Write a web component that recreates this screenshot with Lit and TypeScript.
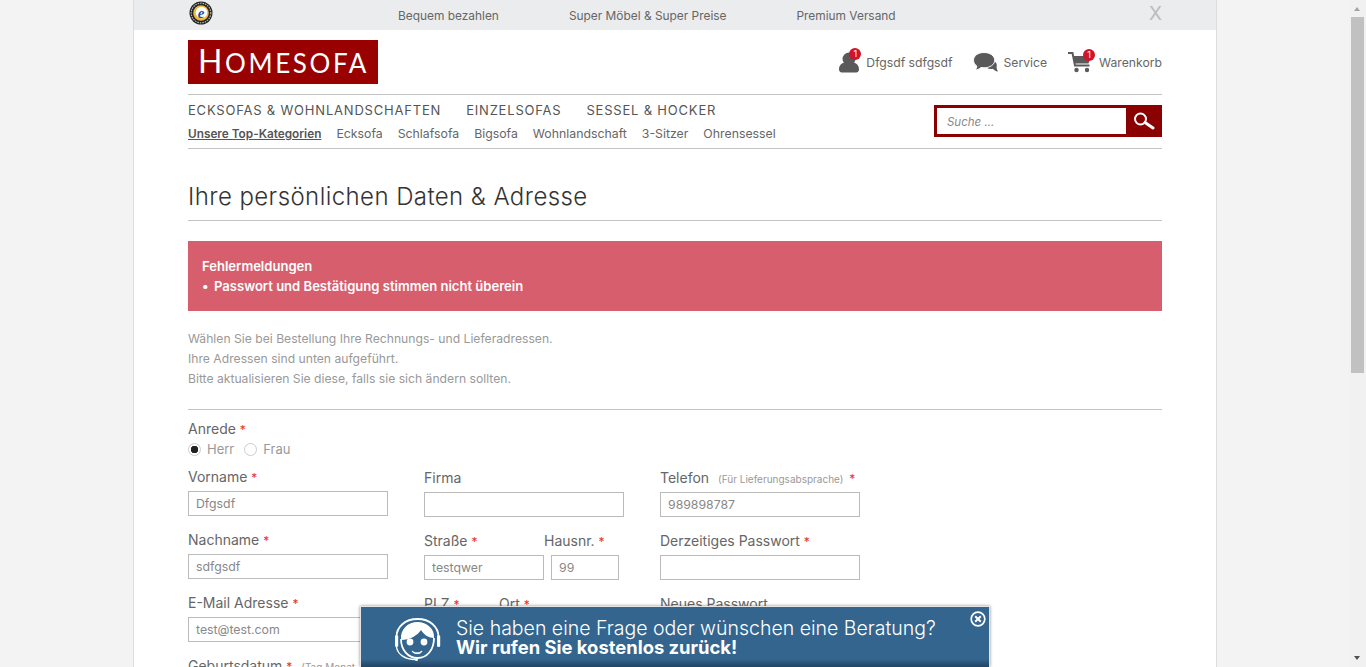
import { LitElement, css, html } from "lit";
import { customElement } from "lit/decorators.js";

const req = html`<span class="req">*</span>`;

@customElement("app-root")
export class AppRoot extends LitElement {
  render() {
    return html`
      <div class="page">
        <div class="sheet">
          <div class="topbar">
            <svg class="seal" width="24" height="24" viewBox="0 0 24 24">
              <circle cx="12" cy="12" r="11.5" fill="#222" />
              <circle cx="12" cy="12" r="9.8" fill="none" stroke="#bbb" stroke-width="1.200" stroke-dasharray="1.500 1" />
              <circle cx="12" cy="12" r="7.800" fill="#e8bb3a" />
              <circle cx="12.500" cy="11.500" r="5.800" fill="#fff" />
              <text x="12" y="16.500" text-anchor="middle" font-family="Liberation Serif" font-style="italic" font-weight="700" font-size="15" fill="#1a4fa0">e</text>
            </svg>
            <div class="usps">
              <span>Bequem bezahlen</span>
              <span>Super Möbel &amp; Super Preise</span>
              <span>Premium Versand</span>
            </div>
            <span class="close-x">X</span>
          </div>

          <div class="inner">
            <header class="head">
              <div class="logo"><span class="big">H</span>OMESOFA</div>
              <div class="tools">
                <a class="tool">
                  <span class="tool-icon">
                    <svg width="22" height="22" viewBox="0 0 22 22">
                      <ellipse cx="11" cy="8" rx="6.500" ry="6.500" fill="#5a5a5a" />
                      <path d="M1 18.500c0-4.500 3-6.500 5.500-7 2.500 2 6.500 2 9 0 2.500.5 5.500 2.500 5.500 7 0 2.500-2 3-4 3H5c-2 0-4-.5-4-3z" fill="#5a5a5a" />
                    </svg>
                    <span class="badge user-badge">1</span>
                  </span>
                  Dfgsdf sdfgsdf
                </a>
                <a class="tool service">
                  <svg width="25" height="20" viewBox="0 0 25 20">
                    <path d="M16 9h5c2.500 1.500 3.500 3.500 2.500 6 0 1.500.5 3 1.500 4.500-2.500-.3-4-1.300-5-2.800-2 .4-4 .3-6-.7z" fill="#5a5a5a" />
                    <path d="M11 .5c6 0 10.700 3.300 10.700 7.700S17 15.800 11 15.800c-1 0-2-.1-3-.3-1.500 1.500-3.500 2.300-6 2.500 1.200-1.300 1.800-2.700 1.800-4C1.700 12.600.500 10.500.500 8.200.500 3.800 5 .5 11 .5z" fill="#5a5a5a" stroke="#fff" stroke-width="1" />
                  </svg>
                  Service
                </a>
                <a class="tool cart">
                  <span class="tool-icon">
                    <svg width="24" height="21" viewBox="0 0 24 21">
                      <path d="M0 1h4.500l2.500 12.500h14.500" fill="none" stroke="#5a5a5a" stroke-width="2" />
                      <path d="M5 4h18l-2.500 7.500H6.500z" fill="#5a5a5a" />
                      <circle cx="8.500" cy="18" r="2.200" fill="#5a5a5a" />
                      <circle cx="19" cy="18" r="2.200" fill="#5a5a5a" />
                    </svg>
                    <span class="badge cart-badge">1</span>
                  </span>
                  Warenkorb
                </a>
              </div>
            </header>

            <nav class="nav">
              <div class="nav-links">
                <div class="main-links">
                  <a>ECKSOFAS &amp; WOHNLANDSCHAFTEN</a>
                  <a>EINZELSOFAS</a>
                  <a>SESSEL &amp; HOCKER</a>
                </div>
                <div class="sub-links">
                  <a class="top">Unsere Top-Kategorien</a>
                  <a>Ecksofa</a>
                  <a>Schlafsofa</a>
                  <a>Bigsofa</a>
                  <a>Wohnlandschaft</a>
                  <a>3-Sitzer</a>
                  <a>Ohrensessel</a>
                </div>
              </div>
              <div class="search">
                <input placeholder="Suche ..." />
                <button aria-label="Suche">
                  <svg width="22" height="18" viewBox="0 0 22 18">
                    <circle cx="7.500" cy="7" r="5.500" fill="none" stroke="#fff" stroke-width="2" />
                    <path d="M12 10.500l8 5.500" stroke="#fff" stroke-width="3" stroke-linecap="round" />
                  </svg>
                </button>
              </div>
            </nav>

            <h1>Ihre persönlichen Daten &amp; Adresse</h1>

            <div class="alert">
              <div>Fehlermeldungen</div>
              <div class="alert-item"><span>•</span>Passwort und Bestätigung stimmen nicht überein</div>
            </div>

            <p class="intro">
              Wählen Sie bei Bestellung Ihre Rechnungs- und Lieferadressen.<br />
              Ihre Adressen sind unten aufgeführt.<br />
              Bitte aktualisieren Sie diese, falls sie sich ändern sollten.
            </p>

            <div class="salutation">
              <div class="label">Anrede ${req}</div>
              <div class="radios">
                <span class="radio on"></span><span>Herr</span>
                <span class="radio"></span><span>Frau</span>
              </div>
            </div>

            <div class="form">
              <div class="col first">
                <div class="field">
                  <div class="label">Vorname ${req}</div>
                  <input value="Dfgsdf" />
                </div>
                <div class="field">
                  <div class="label">Nachname ${req}</div>
                  <input value="sdfgsdf" />
                </div>
                <div class="field">
                  <div class="label">E-Mail Adresse ${req}</div>
                  <input value="test@test.com" />
                </div>
                <div class="field">
                  <div class="label">Geburtsdatum ${req} <small>(Tag.Monat.Jahr)</small></div>
                  <input />
                </div>
              </div>
              <div class="col">
                <div class="field">
                  <div class="label">Firma</div>
                  <input />
                </div>
                <div class="field split">
                  <div class="street">
                    <div class="label">Straße ${req}</div>
                    <input value="testqwer" />
                  </div>
                  <div class="house">
                    <div class="label">Hausnr. ${req}</div>
                    <input value="99" />
                  </div>
                </div>
                <div class="field split">
                  <div class="zip">
                    <div class="label">PLZ ${req}</div>
                    <input />
                  </div>
                  <div class="city">
                    <div class="label">Ort ${req}</div>
                    <input />
                  </div>
                </div>
              </div>
              <div class="col">
                <div class="field">
                  <div class="label">Telefon <small>(Für Lieferungsabsprache)</small> ${req}</div>
                  <input value="989898787" />
                </div>
                <div class="field">
                  <div class="label">Derzeitiges Passwort ${req}</div>
                  <input />
                </div>
                <div class="field">
                  <div class="label">Neues Passwort</div>
                  <input />
                </div>
              </div>
            </div>
          </div>
        </div>

        <div class="scrollbar">
          <span class="arrow up"></span>
          <span class="thumb"></span>
          <span class="arrow down"></span>
        </div>

        <aside class="callback">
          <svg class="agent" width="50" height="46" viewBox="0 0 50 46">
            <path d="M3.500 20C3.500 10 12 2 24.500 2s21 8 21 18" fill="none" stroke="#fff" stroke-width="1.800" />
            <path d="M8 23C7 12 15 5 24.500 5S42 12 41 21c-5 0-10-3-13-8-3 5-11 10-20 10z" fill="#fff" />
            <path d="M8 22c0 11 7 19 16.500 19S41 33 41 21" fill="none" stroke="#fff" stroke-width="1.800" />
            <rect x="2" y="18" width="3.200" height="12" rx="1.600" fill="#fff" />
            <rect x="44" y="18" width="3.200" height="12" rx="1.600" fill="#fff" />
            <circle cx="17" cy="25" r="3.400" fill="#fff" />
            <circle cx="31" cy="25" r="3.400" fill="#fff" />
            <path d="M19 34c3 2.500 7 2.500 10 0-1 3.500-8.500 3.500-10 0z" fill="#fff" stroke="#fff" stroke-width="1" />
            <path d="M3.500 30c1 7 8 12.500 19 12.500" fill="none" stroke="#fff" stroke-width="1.400" />
            <circle cx="23.500" cy="42.500" r="1.500" fill="#fff" />
          </svg>
          <div class="callback-text">
            <div>Sie haben eine Frage oder wünschen eine Beratung?</div>
            <strong>Wir rufen Sie kostenlos zurück!</strong>
          </div>
          <svg class="callback-close" width="16" height="16" viewBox="0 0 16 16">
            <circle cx="8" cy="8" r="6.800" fill="none" stroke="#fff" stroke-width="1.700" />
            <path d="M5.200 5.200l5.600 5.600M10.800 5.200l-5.600 5.600" stroke="#fff" stroke-width="2" />
          </svg>
        </aside>
      </div>
    `;
  }

  static styles = css`
    :host {
      display: block;
      font-family: "Inter", "Liberation Sans", sans-serif;
      color: #666;
    }

    .page {
      position: relative;
      height: 667px;
      overflow: hidden;
      background: #f3f3f3;
    }

    .sheet {
      width: 1082px;
      height: 667px;
      margin-left: 133px;
      background: #fff;
      border-left: 1px solid #ddd;
      border-right: 1px solid #ddd;
      overflow: hidden;
    }

    .topbar {
      position: relative;
      display: flex;
      height: 30px;
      padding: 0 54px;
      background: #ebecee;
      font-size: 11.900px;
    }

    .seal {
      margin: 1px 0 0 1px;
    }

    .usps {
      display: flex;
      gap: 70px;
      margin-left: 185px;
      line-height: 31px;
    }

    .close-x {
      position: absolute;
      right: 54px;
      top: 3px;
      color: #bbb;
      font-size: 19px;
      line-height: 22px;
    }

    .inner {
      padding: 0 54px;
    }

    .head {
      display: flex;
      justify-content: space-between;
      height: 65px;
      padding-top: 10px;
      box-sizing: border-box;
      border-bottom: 1px solid #c4c4c4;
    }

    .logo {
      width: 190px;
      height: 44px;
      box-sizing: border-box;
      padding-left: 10px;
      background: #990000;
      color: #fff;
      font-family: "Lato", sans-serif;
      font-size: 26px;
      line-height: 42px;
      letter-spacing: 2.600px;
      white-space: nowrap;
    }

    .logo .big {
      font-size: 32px;
    }

    .tools {
      display: flex;
      align-items: center;
      gap: 20px;
      height: 44px;
      font-size: 12.200px;
    }

    .tool {
      display: flex;
      align-items: center;
      gap: 6px;
      white-space: nowrap;
    }

    .tool.cart {
      gap: 7px;
      margin-left: 1px;
    }

    .tool-icon {
      position: relative;
      display: flex;
    }

    .badge {
      position: absolute;
      top: -3px;
      width: 12px;
      height: 12px;
      border-radius: 50%;
      background: #d0142c;
      color: #fff;
      font-size: 9px;
      line-height: 12px;
      text-align: center;
    }

    .user-badge {
      left: 11px;
    }

    .cart-badge {
      left: 15px;
    }

    .nav {
      display: flex;
      justify-content: space-between;
      height: 53px;
      border-bottom: 1px solid #c4c4c4;
    }

    .main-links {
      display: flex;
      gap: 25px;
      padding-top: 5px;
      line-height: 20px;
      font-size: 13px;
      letter-spacing: 0.800px;
      color: #555;
    }

    .sub-links {
      display: flex;
      gap: 15px;
      padding-top: 4px;
      line-height: 20px;
      font-size: 12.300px;
      color: #666;
    }

    .sub-links .top {
      color: #555;
      font-size: 11.800px;
      font-weight: 600;
      text-decoration: underline;
    }

    .search {
      display: flex;
      width: 228px;
      height: 32px;
      margin-top: 10px;
      box-sizing: border-box;
      border: 3px solid #8b0000;
      border-right: 0;
      background: #8b0000;
    }

    .search input {
      width: 189px;
      height: 26px;
      padding: 2px 10px 0;
      border: 0;
      outline: 0;
      font: italic 11.500px "Inter", sans-serif;
    }

    .search input::placeholder {
      color: #888;
    }

    .search button {
      display: flex;
      align-items: center;
      justify-content: center;
      width: 36px;
      padding: 0;
      border: 0;
      background: none;
    }

    h1 {
      height: 71px;
      margin: 0;
      border-bottom: 1px solid #c4c4c4;
      color: #333;
      font-size: 24px;
      font-weight: 300;
      line-height: 95px;
      letter-spacing: 0.420px;
    }

    .alert {
      height: 70px;
      box-sizing: border-box;
      margin-top: 20px;
      padding: 15px 14px;
      background: #d75e6c;
      color: #fff;
      font-size: 13.050px;
      font-weight: 600;
      line-height: 20px;
    }

    .alert-item span {
      display: inline-block;
      width: 12px;
    }

    .intro {
      height: 81px;
      margin: 18px 0 0;
      box-sizing: border-box;
      border-bottom: 1px solid #c4c4c4;
      color: #999;
      font-size: 12.170px;
      line-height: 20px;
    }

    .label {
      height: 22px;
      line-height: 22px;
      font-size: 14px;
      white-space: nowrap;
    }

    .label small {
      margin: 0 2px 0 5px;
      color: #999;
      font-size: 10px;
    }

    .req {
      color: #ee2a2a;
      font-size: 12px;
    }

    .salutation {
      padding-top: 8px;
    }

    .radios {
      display: flex;
      align-items: center;
      height: 18px;
      color: #999;
      font-size: 13px;
    }

    .radio {
      width: 11px;
      height: 11px;
      margin-right: 6px;
      border: 1px solid #ccc;
      border-radius: 50%;
    }

    .radio.on {
      background: radial-gradient(circle, #222 0 3.500px, #fff 4px);
    }

    .radios span:nth-child(2) {
      margin-right: 10px;
    }

    .form {
      display: grid;
      grid-template-columns: 200px 200px 200px;
      gap: 36px;
      margin-top: 8px;
    }

    .col {
      padding-top: 1px;
    }

    .col.first {
      padding-top: 0;
    }

    .field {
      height: 63px;
    }

    .label + input {
      margin-top: 3px;
    }

    input {
      display: block;
      box-sizing: border-box;
      width: 100%;
      height: 25px;
      padding: 0 7px;
      border: 1px solid #bbb;
      border-radius: 0;
      outline: 0;
      background: #fff;
      color: #888;
      font: 12.300px "Inter", sans-serif;
    }

    .split {
      display: flex;
    }

    .street {
      width: 120px;
    }

    .house {
      width: 75px;
    }

    .house input {
      width: 68px;
      margin-left: 7px;
    }

    .zip {
      width: 75px;
    }

    .zip input {
      width: 68px;
    }

    .city {
      width: 125px;
    }

    .scrollbar {
      position: absolute;
      top: 0;
      right: 0;
      bottom: 0;
      width: 17px;
      background: #f1f1f1;
    }

    .thumb {
      position: absolute;
      top: 17px;
      left: 2px;
      width: 13px;
      height: 356px;
      background: #c1c1c1;
    }

    .arrow {
      position: absolute;
      left: 5px;
      border-left: 3.500px solid transparent;
      border-right: 3.500px solid transparent;
    }

    .arrow.up {
      top: 7px;
      border-bottom: 4px solid #a3a3a3;
    }

    .arrow.down {
      bottom: 7px;
      border-top: 4px solid #505050;
    }

    .callback {
      position: absolute;
      left: 360px;
      top: 606px;
      display: flex;
      width: 630px;
      height: 61px;
      box-sizing: border-box;
      padding: 10px 0 0 32px;
      border: 1px solid #e4e4e4;
      border-bottom: 0;
      background: linear-gradient(#33658f 0 52px, #1f3f5c 61px);
      box-shadow: 0 0 3px rgba(0, 0, 0, 0.45);
      color: #fff;
    }

    .agent {
      flex: none;
      margin-top: 0;
    }

    .callback-text {
      margin: 2px 0 0 13px;
      font-size: 19.500px;
      font-weight: 300;
      line-height: 19px;
      white-space: nowrap;
    }

    .callback-text strong {
      font-size: 18.400px;
      font-weight: 700;
    }

    .callback-close {
      position: absolute;
      right: 3px;
      top: 4px;
    }
  `;
}
